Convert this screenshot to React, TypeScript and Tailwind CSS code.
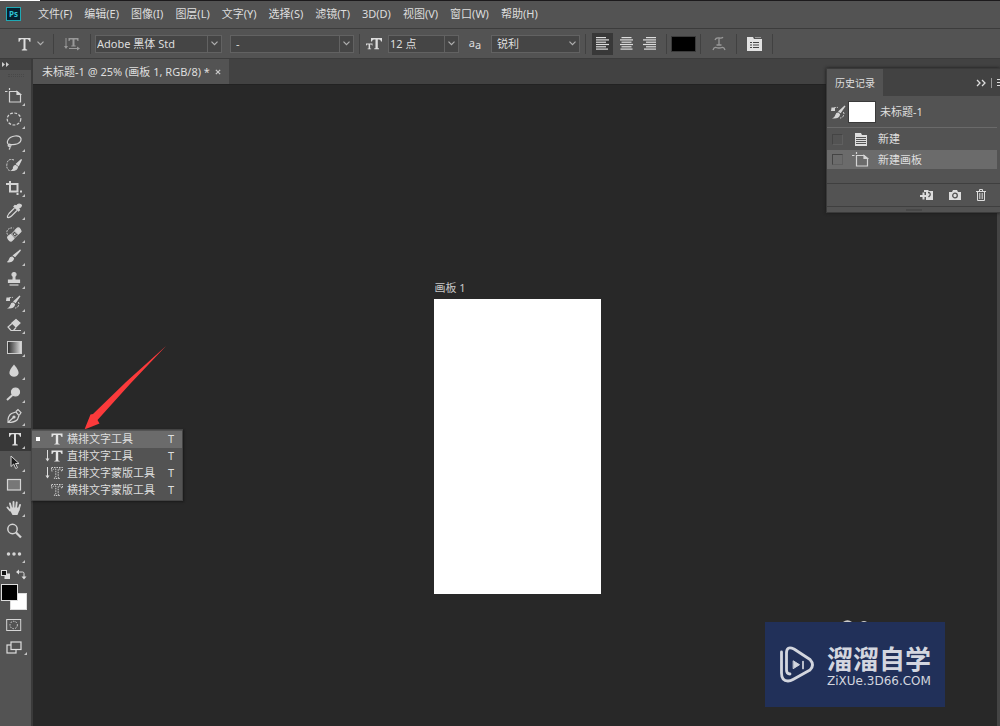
import { useState } from "react";
import type { ReactNode } from "react";

const menus = [
  "文件(F)",
  "编辑(E)",
  "图像(I)",
  "图层(L)",
  "文字(Y)",
  "选择(S)",
  "滤镜(T)",
  "3D(D)",
  "视图(V)",
  "窗口(W)",
  "帮助(H)",
];

const tools: { name: string; icon: ReactNode; plain?: boolean }[] = [
  { name: "画板工具", icon: <ArtboardIcon /> },
  { name: "椭圆选框工具", icon: <MarqueeIcon /> },
  { name: "套索工具", icon: <LassoIcon /> },
  { name: "快速选择工具", icon: <QuickSelectIcon /> },
  { name: "裁剪工具", icon: <CropIcon /> },
  { name: "吸管工具", icon: <EyedropperIcon /> },
  { name: "修复画笔工具", icon: <HealIcon /> },
  { name: "画笔工具", icon: <BrushIcon /> },
  { name: "仿制图章工具", icon: <StampIcon /> },
  { name: "历史记录画笔工具", icon: <HistoryBrushIcon /> },
  { name: "橡皮擦工具", icon: <EraserIcon /> },
  { name: "渐变工具", icon: <GradientIcon /> },
  { name: "模糊工具", icon: <DropIcon /> },
  { name: "减淡工具", icon: <DodgeIcon /> },
  { name: "钢笔工具", icon: <PenIcon /> },
  { name: "文字工具", icon: <TypeIcon className="h-4 w-4" /> },
  { name: "路径选择工具", icon: <ArrowCursorIcon /> },
  { name: "矩形工具", icon: <RectIcon /> },
  { name: "抓手工具", icon: <HandIcon /> },
  { name: "缩放工具", icon: <ZoomIcon />, plain: true },
  { name: "编辑工具栏", icon: <DotsIcon /> },
];

const typeTools = [
  { name: "横排文字工具", vertical: false, mask: false },
  { name: "直排文字工具", vertical: true, mask: false },
  { name: "直排文字蒙版工具", vertical: true, mask: true },
  { name: "横排文字蒙版工具", vertical: false, mask: true },
];

export default function App() {
  return (
    <div className="flex min-h-screen flex-col bg-[#282828] font-['Noto_Sans','Noto_Sans_CJK_SC',sans-serif] text-[11px] leading-4 text-[#dedede]">
      <MenuBar />
      <OptionsBar />
      <div className="flex flex-1">
        <Toolbar />
        <main className="relative flex min-w-0 flex-1 flex-col border-l-2 border-[#3a3a3a]">
          <TabBar />
          <Canvas />
          <HistoryPanel />
        </main>
      </div>
    </div>
  );
}

function MenuBar() {
  return (
    <header className="flex h-7 items-center border-t border-[#1c1a1c] bg-[#535353] pb-[2px] pl-[6px]">
      <div className="absolute top-0 left-0 h-px w-10 bg-white" />
      <div className="flex h-[14px] w-[15px] items-center justify-center border border-[#1fa9b5] bg-[#04202f] text-[8px] leading-none font-bold text-[#2fc4d6]">
        Ps
      </div>
      <nav className="ml-[17px] flex gap-3">
        {menus.map((m) => (
          <button key={m} className="whitespace-nowrap">
            {m}
          </button>
        ))}
      </nav>
    </header>
  );
}

function Divider() {
  return <div className="h-5 w-px shrink-0 bg-[#414141]" />;
}

function Dropdown(props: { label: string; value: string; className: string; split?: boolean }) {
  return (
    <div className={"relative h-[18px] shrink-0 border border-[#626262] bg-[#454545] " + props.className}>
      <select aria-label={props.label} className="h-4 w-full appearance-none bg-transparent pr-4 pl-px outline-none">
        <option>{props.value}</option>
      </select>
      <div
        className={
          "pointer-events-none absolute inset-y-0 right-0 flex w-[14px] items-center justify-center " +
          (props.split ? "border-l border-[#626262]" : "")
        }
      >
        <ChevronIcon />
      </div>
    </div>
  );
}

function OptionsBar() {
  const [align, setAlign] = useState("left");

  return (
    <div className="flex h-[31px] items-center border-t border-b border-[#3c3c3c] bg-[#535353] pl-4">
      <button aria-label="工具预设" className="flex w-[37px] items-center gap-1">
        <TypeIcon className="h-4 w-[17px]" />
        <ChevronIcon />
      </button>
      <Divider />
      <button aria-label="切换文本取向" className="flex w-9 justify-center text-[#999]">
        <OrientationIcon />
      </button>
      <Divider />
      <Dropdown label="字体" value="Adobe 黑体 Std" className="ml-1 w-[127px]" split />
      <Dropdown label="字体样式" value="-" className="ml-2 mr-[5px] w-[124px] pl-1" split />
      <Divider />
      <div className="flex w-7 justify-center">
        <FontSizeIcon />
      </div>
      <Dropdown label="字号" value="12 点" className="w-[71px]" split />
      <div className="flex w-8 justify-center">
        <span className="pb-[2px]">a</span>
        <span className="pt-[2px]">a</span>
      </div>
      <Dropdown label="消除锯齿" value="锐利" className="mr-[5px] w-[89px] pl-1" />
      <Divider />
      <div className="flex w-20 items-center justify-between pl-[6px] pr-[6px]">
        {["left", "center", "right"].map((a) => (
          <button
            key={a}
            aria-label={a}
            onClick={() => setAlign(a)}
            className={"flex h-[22px] w-[21px] items-center justify-center " + (a === align ? "bg-[#383838]" : "")}
          >
            <AlignIcon side={a} />
          </button>
        ))}
      </div>
      <Divider />
      <button aria-label="文本颜色" className="mx-1 h-4 w-[25px] border border-[#3b3b3b] bg-black" />
      <Divider />
      <button aria-label="变形文字" className="flex w-[35px] justify-center text-[#999]">
        <WarpIcon />
      </button>
      <Divider />
      <button aria-label="字符面板" className="flex w-[35px] justify-center">
        <PanelIcon />
      </button>
      <Divider />
    </div>
  );
}

function TabBar() {
  return (
    <div className="flex h-[26px] border-b border-[#222] bg-[#424242]">
      <div className="flex items-center gap-[5px] bg-[#535353] pr-2 pl-[9px]">
        <span className="whitespace-nowrap">未标题-1 @ 25% (画板 1, RGB/8) *</span>
        <button aria-label="关闭">
          <svg className="h-[6px] w-[6px]" viewBox="0 0 7 7" stroke="#c8c8c8" strokeWidth="1.5">
            <path d="M1 1l5 5M6 1L1 6" />
          </svg>
        </button>
      </div>
    </div>
  );
}

function Toolbar() {
  return (
    <aside className="relative z-10 flex w-[31px] shrink-0 flex-col bg-[#535353]">
      <div className="h-[11px] bg-[#424242] pl-[2px]">
        <svg className="h-[11px] w-2" viewBox="0 0 8 11" fill="#ccc">
          <path d="M0 3l3 2.500L0 8zM4 3l3 2.500L4 8z" />
        </svg>
      </div>
      <div className="mx-auto mt-1 h-[3px] w-4 border-y border-dotted border-[#484848]" />
      <div className="mt-2 grid h-[480px] auto-rows-fr">
        {tools.map((t) => (
          <div key={t.name} className="relative flex">
            <button
              aria-label={t.name}
              className={"flex w-full items-center " + (t.name === "文字工具" ? "bg-[#383838] pl-[7px]" : "pl-[5px]")}
            >
              {t.icon}
            </button>
            {!t.plain && (
              <svg className="pointer-events-none absolute right-[6px] bottom-[2px] h-[3px] w-[3px]" viewBox="0 0 3 3">
                <path d="M3 0v3H0z" fill="#c4c4c4" />
              </svg>
            )}
            {t.name === "文字工具" && <TypeMenu />}
          </div>
        ))}
      </div>
      <div className="mt-1 flex justify-between pr-1 pl-[1px]">
        <button aria-label="默认颜色">
          <svg className="h-[11px] w-[10px]" viewBox="0 0 10 11">
            <rect x="3.500" y="4.500" width="5.500" height="5.500" fill="#ddd" />
            <rect x=".5" y="1.500" width="5" height="5" fill="#111" stroke="#ddd" />
          </svg>
        </button>
        <button aria-label="切换颜色">
          <svg className="h-[11px] w-[11px]" viewBox="0 0 11 11" fill="none" stroke="#ddd">
            <path d="M3 3h3.500q1.500 0 1.500 1.500V8" />
            <path d="M0 3l3-2.500v5zM5.500 7.500h5L8 10.500z" fill="#ddd" stroke="none" />
          </svg>
        </button>
      </div>
      <div className="relative mt-1 h-[27px]">
        <button aria-label="背景色" className="absolute top-[9px] left-[10px] h-[17px] w-[17px] border border-[#ddd] bg-white" />
        <button aria-label="前景色" className="absolute top-0 left-[1px] h-[17px] w-[17px] border border-[#ddd] bg-black" />
      </div>
      <button aria-label="快速蒙版" className="mt-[7px] pl-[6px]">
        <svg className="h-[14px] w-4" viewBox="0 0 16 14" fill="none" stroke="#d5d5d5">
          <rect x=".7" y="1.500" width="14" height="11" />
          <circle cx="7.700" cy="7" r="3.700" strokeDasharray="1.500 1.200" />
        </svg>
      </button>
      <button aria-label="屏幕模式" className="mt-[9px] flex items-end gap-[2px] pl-[6px]">
        <svg className="h-[14px] w-4" viewBox="0 0 16 14" fill="none" stroke="#ddd" strokeWidth="1.200">
          <rect x="1" y="4" width="9" height="8" />
          <rect x="5" y="1" width="10" height="7.500" fill="#535353" />
        </svg>
        <svg className="h-[3px] w-[3px]" viewBox="0 0 3 3">
          <path d="M3 0v3H0z" fill="#c4c4c4" />
        </svg>
      </button>
    </aside>
  );
}

function TypeMenu() {
  return (
    <ul className="absolute top-[1px] left-full w-[152px] border border-[#444] bg-[#535353] py-[1px] shadow-[1px_1px_2px_#1a1a1a]">
      {typeTools.map((t, i) => (
        <li key={t.name}>
          <button
            className={"flex h-[17px] w-full items-center pr-2 pl-1 whitespace-nowrap " + (i === 0 ? "bg-[#6b6b6b]" : "")}
          >
            <span className={"mr-1 h-1 w-1 " + (i === 0 ? "bg-white" : "")} />
            <MenuTypeIcon vertical={t.vertical} mask={t.mask} />
            <span className="ml-1 flex-1 text-left">{t.name}</span>
            <span>T</span>
          </button>
        </li>
      ))}
    </ul>
  );
}

function Canvas() {
  return (
    <div className="relative flex flex-1 justify-center border-r-[3px] border-[#444] bg-[#282828]">
      <section className="pt-[195px] pl-1">
        <h2 className="mb-[3px] pl-px text-[#c8c8c8]">画板 1</h2>
        <div className="h-[295px] w-[167px] bg-white" />
      </section>
      {/* red pointer towards the open type menu */}
      <svg className="absolute top-[260px] left-[50px] h-[86px] w-[86px]" viewBox="0 0 86 86" fill="#fb3a3b">
        <path d="M83 1L43 37L10 69L7.500 69.500L1.500 84.500L16.500 78.500L14.500 75L47 39Z" />
      </svg>
      <Watermark />
    </div>
  );
}

function Watermark() {
  return (
    <div className="absolute right-[52px] bottom-[19px] flex h-[85px] w-[180px] items-center bg-[#213059] pl-[14px] text-[#d3d6df]">
      <svg className="absolute -top-[2px] left-[78px] h-[2px] w-7" viewBox="0 0 28 2" fill="#ccc">
        <path d="M0 2q4.500-3.500 9 0zM18 2q3-2 6 0z" />
      </svg>
      <svg
        className="h-[37px] w-9 shrink-0"
        viewBox="0 0 36 37"
        fill="none"
        stroke="currentColor"
        strokeWidth="2.800"
        strokeLinecap="round"
        strokeLinejoin="round"
      >
        <path d="M2.500 6v21q0 8 6.500 8 2.500 0 5-1.500L31 24q5-5 0-10.500L15 3Q7.500-.5 7.500 7v17q0 4 3.500 4" />
        <path d="M14.500 15l6 3.700-6 3.800z" fill="currentColor" strokeWidth="1" />
        <path d="M24 15.500v7" strokeWidth="1.700" />
      </svg>
      <div className="ml-3">
        <div className="text-[26px] leading-8 font-bold">溜溜自学</div>
        <div className="font-['DejaVu_Sans'] text-[12px] leading-3">ZiXUe.3D66.COM</div>
      </div>
    </div>
  );
}

function HistoryPanel() {
  return (
    <section className="absolute top-[9px] right-0 w-[174px] border border-r-0 border-[#3a3a3a] bg-[#535353] shadow-[0_0_3px_#1a1a1a]">
      <div className="flex h-[27px] items-stretch justify-between bg-[#424242]">
        <h2 className="flex items-center bg-[#535353] px-2 text-[10px]">历史记录</h2>
        <div className="flex items-center gap-[5px]">
          <svg className="h-2 w-[10px]" viewBox="0 0 10 8" fill="none" stroke="#ddd" strokeWidth="1.300">
            <path d="M1 1l3 3-3 3M6 1l3 3-3 3" />
          </svg>
          <span className="h-[10px] w-px bg-[#999]" />
          <svg className="h-[7px] w-[3px]" viewBox="0 0 3 7" stroke="#ddd">
            <path d="M0 .5h3M0 3.500h3M0 6.500h3" />
          </svg>
        </div>
      </div>
      <div className="mr-[3px]">
        <div className="flex h-8 items-center border-b border-[#6a6a6a] pl-[3px]">
          <HistoryBrushIcon />
          <div className="h-[22px] w-7 border border-[#3a3a3a] bg-white" />
          <span className="ml-1">未标题-1</span>
        </div>
        <HistoryRow name="新建" icon={<DocIcon />} />
        <HistoryRow name="新建画板" icon={<ArtboardIcon />} active />
      </div>
      <div className="mt-[14px] flex h-6 items-center justify-end gap-[14px] border-t border-b border-[#3f3f3f] pr-[14px]">
        <button aria-label="从当前状态创建新文档">
          <svg className="h-[14px] w-[14px]" viewBox="0 0 14 14">
            <path d="M4 2h4l1 1h4v9H6V4H4z" fill="#ddd" />
            <path d="M0 8h7M3.500 4.500v7" stroke="#ddd" strokeWidth="2" />
            <path d="M8 4.500q3 0 2 3l-1.500 1.500" fill="none" stroke="#535353" strokeWidth="1.300" />
          </svg>
        </button>
        <button aria-label="创建新快照">
          <svg className="h-[14px] w-[14px]" viewBox="0 0 14 14" fill="#ddd">
            <path d="M1 4h3l1-2h4l1 2h3v8H1z" />
            <circle cx="7" cy="7.500" r="2.300" fill="none" stroke="#535353" strokeWidth="1.300" />
          </svg>
        </button>
        <button aria-label="删除">
          <svg className="h-[14px] w-[10px]" viewBox="0 0 10 14" fill="none" stroke="#ddd">
            <path d="M0 3.500h10M3.500 3V1.500h3V3M1.500 4v8.500h7V4M3.800 5v6M6.200 5v6" />
          </svg>
        </button>
      </div>
      <div className="flex h-[5px] items-center justify-center">
        <div className="h-[2px] w-4 bg-[#484848]" />
      </div>
    </section>
  );
}

function HistoryRow(props: { name: string; icon: ReactNode; active?: boolean }) {
  return (
    <div className={"flex items-center pl-[5px] " + (props.active ? "h-[19px] bg-[#6b6b6b]" : "h-[22px]")}>
      <input
        type="checkbox"
        aria-label={props.name}
        className="h-[11px] w-[11px] appearance-none border border-[#5f5f5f] border-t-[#444] border-l-[#444]"
      />
      <span className="ml-[9px]">{props.icon}</span>
      <button className="ml-2">{props.name}</button>
    </div>
  );
}

function ChevronIcon() {
  return (
    <svg className="h-[5px] w-[7px]" viewBox="0 0 7 5" fill="none" stroke="#b0b0b0" strokeWidth="1.200">
      <path d="M.5 .7l3 3 3-3" />
    </svg>
  );
}

function TypeIcon(props: { className: string }) {
  return (
    <svg className={props.className} viewBox="0 0 16 16" fill="#dedede">
      <path d="M2 2h12v3.800h-1q-.3-2.600-2-2.600H9v9.300q0 1 1.700 1v1H5.300v-1q1.700 0 1.700-1V3.200H5q-1.700 0-2 2.600H2z" />
    </svg>
  );
}

function MenuTypeIcon(props: { vertical: boolean; mask: boolean }) {
  return (
    <svg className="h-[14px] w-[19px]" viewBox="0 0 19 14" fill="none">
      {props.vertical && (
        <>
          <path d="M3.500 1v10" stroke="#ddd" />
          <path d="M1.500 9.500h4l-2 3z" fill="#ddd" />
        </>
      )}
      <path
        d="M7.500 1.500h11v3.500h-1q-.3-2-1.700-2h-1.600v8q0 .9 1.500.9v.6h-5.400v-.6q1.500 0 1.500-.9v-8h-1.600q-1.400 0-1.700 2h-1z"
        fill={props.mask ? "none" : "#e6e6e6"}
        stroke={props.mask ? "#ddd" : "none"}
        strokeDasharray="1.500 1"
        strokeWidth=".9"
      />
    </svg>
  );
}

function OrientationIcon() {
  return (
    <svg className="h-[14px] w-4" viewBox="0 0 16 14" fill="currentColor">
      <path d="M1.500 1h1v8H4l-2 3-2-3h1.500zM4.500 1h10v3h-1l-.7-1.500h-2.300v6h1.200v1h-4.400v-1h1.200v-6H6.200L5.500 4h-1zM5 11h8V9.500l3 2-3 2V12H5z" />
    </svg>
  );
}

function FontSizeIcon() {
  return (
    <svg className="h-[14px] w-4" viewBox="0 0 16 14" fill="#ddd">
      <path d="M5 1h11v3.500h-1Q14.700 2.500 13 2.500h-1.200v8.700H13v1H8.300v-1h1.200V2.500H8q-1.700 0-2 2H5zM0 6.500h6.500v2H6l-.5-1h-1.400v4h1v.8H1.600v-.8h1v-4H1l-.5 1H0z" />
    </svg>
  );
}

function AlignIcon(props: { side: string }) {
  const widths = [10, 13, 10, 13, 10, 12];
  return (
    <svg className="h-[13px] w-[13px]" viewBox="0 0 13 13" fill="#ddd">
      {widths.map((w, i) => (
        <rect
          key={i}
          x={props.side === "left" ? 0 : props.side === "right" ? 13 - w : (13 - w) / 2}
          y={i * 2.3}
          width={w}
          height="1.200"
        />
      ))}
    </svg>
  );
}

function WarpIcon() {
  return (
    <svg className="h-[15px] w-[14px]" viewBox="0 0 14 15" fill="none" stroke="currentColor" strokeWidth="1.300">
      <path d="M3 4q1-2.500 4-2t4-.8M7 2v7M4.500 9h5M1 14q1-3 3-2.500 3 1 6 0 2-.5 3 2.500" />
    </svg>
  );
}

function PanelIcon() {
  return (
    <svg className="h-[14px] w-[15px]" viewBox="0 0 15 14">
      <path d="M0 0h6l1 2h8v12H0z" fill="#e2e2e2" />
      <path d="M8 .5h6" stroke="#999" />
      <path d="M3 5.500h2M6 5.500h6M3 8h2M6 8h6M3 10.500h2M6 10.500h6" stroke="#444" />
    </svg>
  );
}

function DocIcon() {
  return (
    <svg className="h-4 w-[18px]" viewBox="0 0 18 16">
      <path d="M3 2h6l1 2h5v11H3z" fill="#ddd" />
      <path d="M4 6.500h10M4 8.500h10M4 10.500h10M4 12.500h10" stroke="#555" />
    </svg>
  );
}

function Icon(props: { children: ReactNode }) {
  return (
    <svg className="h-[18px] w-[18px]" viewBox="0 0 18 18" fill="none" stroke="#d4d4d4" strokeWidth="1.200">
      {props.children}
    </svg>
  );
}

function ArtboardIcon() {
  return (
    <Icon>
      <path d="M0 4.500h2.500M4.500 1v2M4.500 4.500H12L15.500 7.500V15H4.500z" />
      <path d="M12 4.500v3h3.500z" fill="#d4d4d4" />
    </Icon>
  );
}

function MarqueeIcon() {
  return (
    <Icon>
      <ellipse cx="9" cy="9" rx="6.800" ry="6" strokeDasharray="2.800 1.500" />
    </Icon>
  );
}

function LassoIcon() {
  return (
    <Icon>
      <path d="M5 12.500Q1 10.500 3 7q2-3.500 7-4t6 2.500q.5 3.500-3.500 5.300Q9 12 6 11.500" />
      <path d="M5.500 11.500q1.500 1.500-1 2-2-.3-1-1.700 1-1 2-.3M5 13.500q.5 1.500-1 3" />
    </Icon>
  );
}

function QuickSelectIcon() {
  return (
    <Icon>
      <path d="M9 4Q3 2 2 7.500t2.500 7q2 .5 3-.5" strokeDasharray="2 1" strokeWidth="1" />
      <path d="M16.500 3.500l-3 6-2-1.500zM10.500 9.500l2 1.500q-.5 3.500-5.500 3.500 2-1 1.500-3 .5-2 2-2z" fill="#d4d4d4" />
    </Icon>
  );
}

function CropIcon() {
  return (
    <Icon>
      <path d="M5 2v10.500h8.500M15 12.500h2M1 5h11.500v7M12.500 14v2" strokeWidth="2" />
    </Icon>
  );
}

function EyedropperIcon() {
  return (
    <Icon>
      <path d="M9.500 6L4 11.500Q2 14 2.500 15.500q2 .5 4-1.500L12 8.500" />
      <path d="M9 4.500l4.500 4.500 1-1-1-1.500L16 4.500Q17 3 15.500 2.500q-1.500-1-2.500 0L11.500 4 10 3.500z" fill="#d4d4d4" />
    </Icon>
  );
}

function HealIcon() {
  return (
    <Icon>
      <path d="M2.500 9.500q-1.500-3 .5-5T8.500 3" strokeDasharray="1.700 1" strokeWidth="1" />
      <path d="M3 11.500l2.500-2 3.500 4L6.500 16Q5 16.500 3.500 14.500T3 11.500zM10 5.500L12.500 3q1.500-.5 2.500 1t1 2.500L13.500 9z" fill="#d4d4d4" />
      <path d="M6.500 9l3-3 3.500 3.500-3 3z" strokeWidth="1" />
      <path d="M9 8.500h1.500v1.500H9z" fill="#d4d4d4" stroke="none" />
    </Icon>
  );
}

function BrushIcon() {
  return (
    <Icon>
      <path d="M15.500 3L10 9.500 8.500 8.500zM7 10l1.500 1.500q-.5 3.500-6 3.500 1.500-.7 2-2.700Q5 10 7 10z" fill="#d4d4d4" />
    </Icon>
  );
}

function StampIcon() {
  return (
    <Icon>
      <circle cx="9" cy="4.500" r="2" fill="#d4d4d4" />
      <path d="M8.300 6.500h1.500L10 10h4.500v2.500h-11V10H8z" fill="#d4d4d4" />
      <path d="M4.500 15h9" />
    </Icon>
  );
}

function HistoryBrushIcon() {
  return (
    <Icon>
      <path d="M3.500 5.500q2-1.500 4.500-1M13 9q2 1 0 4.500-1 1.500-3 1.500" strokeDasharray="2.500 1" strokeWidth="1" />
      <path d="M1.500 4.500l3.500 0L5 8H1z" fill="#d4d4d4" stroke="none" />
      <path d="M15 3L10.500 9.500 9 8.500zM8 10l1.500 1.500q-.5 3.500-5.500 3.500 1.500-1 2-3 .5-2 2-2z" fill="#d4d4d4" />
    </Icon>
  );
}

function EraserIcon() {
  return (
    <Icon>
      <path d="M7 7l4-3.500 4 3.500-4 4z" fill="#d4d4d4" />
      <path d="M7 7.500L3 11l3 3.500h2.500l2.500-3M8 14.500h8" />
    </Icon>
  );
}

function GradientIcon() {
  return <div className="ml-[2px] h-[13px] w-[15px] border border-[#ccc] bg-linear-to-r from-[#333] to-[#ddd]" />;
}

function DropIcon() {
  return (
    <Icon>
      <path d="M9 2.500q5.500 6.500 4.500 9.300-1.200 3-4.500 3t-4.500-3Q3.500 9 9 2.500z" fill="#d4d4d4" stroke="none" />
    </Icon>
  );
}

function DodgeIcon() {
  return (
    <Icon>
      <circle cx="10.500" cy="7" r="4" fill="#d4d4d4" />
      <path d="M7.500 10l-5.500 5" strokeWidth="2" />
    </Icon>
  );
}

function PenIcon() {
  return (
    <Icon>
      <path d="M3 15.500q-.5-6.500 3.500-9l4.500-1.500 3 3.500-1.500 4Q9.500 15.500 3 15.500zM3.500 15L9 10M11 4.500l2-2 3 3L14.500 8" />
      <circle cx="9" cy="10" r="1" fill="#d4d4d4" />
    </Icon>
  );
}

function ArrowCursorIcon() {
  return (
    <Icon>
      <path d="M6 3v10.500l2.700-2.500 2 4.500 1.800-.8-2-4.200h3.500z" fill="#1c1c1c" strokeWidth="1" />
    </Icon>
  );
}

function RectIcon() {
  return (
    <Icon>
      <rect x="2.500" y="3.500" width="13" height="10.500" fill="#777" />
    </Icon>
  );
}

function HandIcon() {
  return (
    <Icon>
      <path d="M5 11.500L2.500 8.500M6.500 10L5 4.500M8.500 9V3M11 9.500l.7-6M13.500 11l1.500-5" strokeWidth="1.900" strokeLinecap="round" />
      <path d="M4.500 10.500L6 8.500h8l.5 2.500-2 5h-5z" fill="#d4d4d4" stroke="none" />
    </Icon>
  );
}

function ZoomIcon() {
  return (
    <Icon>
      <circle cx="7.500" cy="7" r="4.700" strokeWidth="1.500" />
      <path d="M11 10.500l5 5" strokeWidth="2.300" />
    </Icon>
  );
}

function DotsIcon() {
  return (
    <Icon>
      <path d="M3.500 9h0M9 9h0M14.500 9h0" strokeWidth="3.500" strokeLinecap="round" />
    </Icon>
  );
}
